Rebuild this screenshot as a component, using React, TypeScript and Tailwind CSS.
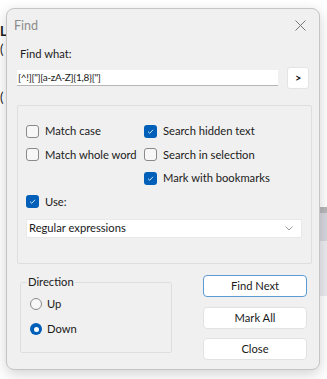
import React from "react";

const font = { fontFamily: 'Lato, "Open Sans", sans-serif' };

function Check({ on }: { on?: boolean }) {
  return on ? (
    <span className="w-[13px] h-[13px] rounded-[3px] bg-[#005fb8] flex items-center justify-center shrink-0">
      <svg width="9" height="9" viewBox="0 0 9 9">
        <path d="M2 4.6 L3.8 6.3 L7 2.8" stroke="#cfe0f3" strokeWidth="1" fill="none" />
      </svg>
    </span>
  ) : (
    <span className="w-[13px] h-[13px] rounded-[3px] border border-[#8a8a8a] bg-[#f7f7f7] shrink-0" />
  );
}

function Row({ on, label }: { on?: boolean; label: string }) {
  return (
    <div className="flex items-center gap-[6px] h-[14px] whitespace-nowrap">
      <Check on={on} />
      <span>{label}</span>
    </div>
  );
}

function Btn({ label, focus }: { label: string; focus?: boolean }) {
  return (
    <div
      className={`w-[104px] h-[22px] rounded-[4px] bg-white flex items-center justify-center ${
        focus ? "border border-[#5b9bd5]" : "border border-[#e2e2e2]"
      }`}
    >
      {label}
    </div>
  );
}

export default function App() {
  return (
    <div className="relative w-[327px] h-[379px] bg-white overflow-hidden text-[11.2px] leading-[16px] text-[#1a1a1a]" style={font}>
      {/* text behind the dialog */}
      <div className="absolute left-[0px] top-[25px] text-[13px] leading-[12px] font-bold">L</div>
      <div className="absolute left-[0px] top-[43px] text-[13px] leading-[12px]">(</div>
      <div className="absolute left-[0px] top-[91px] text-[13px] leading-[12px]">(</div>
      <div className="absolute right-0 top-[207px] w-[10px] h-[6px] bg-[#b8b8bc]" />
      <div className="absolute right-0 top-[213px] w-[10px] h-[28px] bg-[#d6d6de]" />
      <div className="absolute right-0 top-[241px] w-[10px] h-[55px] bg-[#ececf0]" />

      <div className="absolute left-[6px] top-[8px] w-[314px] h-[362px] rounded-[8px] border border-[#c4c4c4] bg-[#f0f0f0] shadow-[0_4px_14px_rgba(0,0,0,0.18)] flex flex-col">
        {/* title bar */}
        <div className="h-[33px] flex items-center justify-between pl-[7px] pr-[13px]">
          <span className="text-[12.5px] text-[#8c8c8c]">Find</span>
          <svg width="11" height="11" viewBox="0 0 11 11">
            <path d="M0.5 0.5 L10.5 10.5 M10.5 0.5 L0.5 10.5" stroke="#777" strokeWidth="1" />
          </svg>
        </div>

        <div className="px-[10px] flex flex-col">
          <div className="mt-[4px] pl-[3px] leading-[16px]">Find what:</div>
          <div className="mt-[5px] flex items-center gap-[9px]">
            <div className="w-[264px] h-[16px] bg-white border-b border-[#b5b5b5] pl-[1px] text-[10px] tracking-[-0.3px] leading-[15px] whitespace-nowrap">
              [^!]["][a-zA-Z]{"{1,8}"}["]
            </div>
            <div className="w-[22px] h-[22px] bg-white rounded-[3px] border border-[#e4e4e4] flex items-center justify-center text-[11px] font-bold">
              &gt;
            </div>
          </div>

          {/* options group */}
          <div className="mt-[16px] w-[295px] h-[159px] border border-[#dedede] rounded-[2px] pt-[18px] pl-[8px] pr-[9px]">
            <div className="grid grid-cols-[118px_1fr] gap-y-[9.5px]">
              <Row label="Match case" />
              <Row on label="Search hidden text" />
              <Row label="Match whole word" />
              <Row label="Search in selection" />
              <div />
              <Row on label="Mark with bookmarks" />
              <Row on label="Use:" />
            </div>
            <div className="mt-[10px] w-[276px] h-[19px] bg-white rounded-[2px] border border-[#e8e8e8] flex items-center justify-between pl-[2px] pr-[8px]">
              <span>Regular expressions</span>
              <svg width="8" height="5" viewBox="0 0 8 5">
                <path d="M0.5 0.5 L4 4 L7.5 0.5" stroke="#9a9a9a" strokeWidth="1" fill="none" />
              </svg>
            </div>
          </div>

          {/* bottom */}
          <div className="mt-[11px] flex justify-between">
            <fieldset className="w-[152px] h-[78px] border border-[#dedede] rounded-[2px] ml-[3px] px-[9px]">
              <legend className="px-[1px] leading-[14px] -ml-[3px]">Direction</legend>
              <div className="flex flex-col gap-[9px] mt-[7px]">
                <div className="flex items-center gap-[5px]">
                  <span className="w-[12px] h-[12px] rounded-full border border-[#8a8a8a] bg-[#f7f7f7]" />
                  <span>Up</span>
                </div>
                <div className="flex items-center gap-[5px]">
                  <span className="w-[12px] h-[12px] rounded-full bg-[#005fb8] flex items-center justify-center">
                    <span className="w-[5px] h-[5px] rounded-full bg-white" />
                  </span>
                  <span>Down</span>
                </div>
              </div>
            </fieldset>
            <div className="flex flex-col gap-[9.5px] mr-[2px]">
              <Btn focus label="Find Next" />
              <Btn label="Mark All" />
              <Btn label="Close" />
            </div>
          </div>
        </div>
      </div>
    </div>
  );
}
